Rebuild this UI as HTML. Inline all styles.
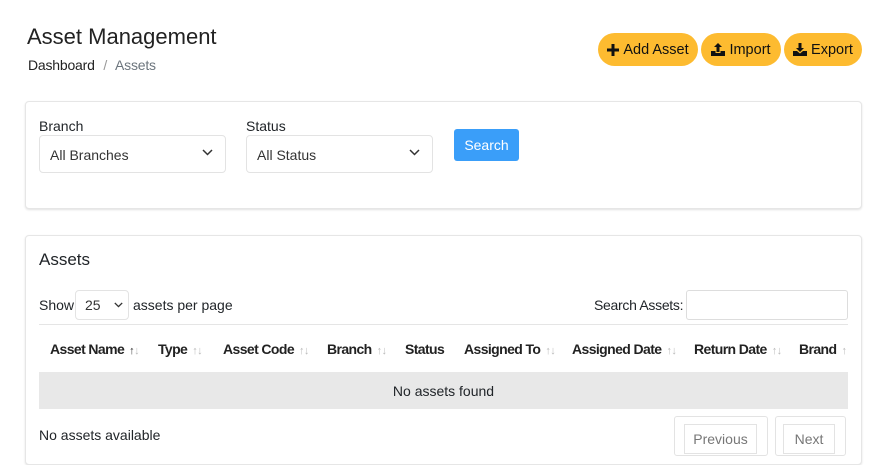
<!DOCTYPE html>
<html><head><meta charset="utf-8"><style>
*{box-sizing:border-box;margin:0;padding:0}
body{width:889px;height:448px;overflow:hidden;background:#fff;font-family:"Liberation Sans",sans-serif;color:#212529;position:relative}
.a{position:absolute;white-space:nowrap}
.card{position:absolute;background:#fff;border:1px solid #e6e6e6;border-radius:4px;box-shadow:0 1px 2px rgba(0,0,0,.12)}
.btn{position:absolute;top:33px;height:33px;background:#fdbb30;border-radius:17px;font-size:14.5px;color:#111;display:flex;align-items:center;justify-content:center;gap:4px}
.sel{position:absolute;height:38px;border:1px solid #e3e3e3;border-radius:4px;font-size:14px;padding:11px 10px;color:#333}
.chev{position:absolute;right:12px;top:13px}
.th{position:absolute;top:341px;font-size:14px;font-weight:bold;color:#222;letter-spacing:-0.6px}
.ar{color:#bbb;font-weight:normal;font-size:11px;margin-left:5px}
</style></head><body>
<div class="a" style="left:27px;top:24px;font-size:22px;color:#222">Asset Management</div>
<div class="a" style="left:28px;top:57px;font-size:14px;color:#222;letter-spacing:-0.2px">Dashboard <span style="color:#999;margin:0 5px">/</span> <span style="color:#6c757d">Assets</span></div>

<div class="btn" style="left:598px;width:100px"><svg width="12" height="12" viewBox="0 0 12 12"><path d="M4.5 0h3v4.5H12v3H7.5V12h-3V7.5H0v-3h4.5z" fill="#111"/></svg>Add Asset</div>
<div class="btn" style="left:701px;width:80px"><svg width="14" height="13" viewBox="0 0 14 13"><path d="M7 0L11 4H8.5v5h-3V4H3z M0 8h4.5v2h5V8H14v5H0z" fill="#111"/></svg>Import</div>
<div class="btn" style="left:784px;width:78px"><svg width="14" height="13" viewBox="0 0 14 13"><path d="M5.5 0h3v5H11L7 9 3 5h2.5z M0 8h4l3 2.5L10 8h4v5H0z" fill="#111"/></svg>Export</div>

<div class="card" style="left:25px;top:101px;width:837px;height:108px"></div>
<div class="a" style="left:39px;top:118px;font-size:14px">Branch</div>
<div class="sel" style="left:39px;top:135px;width:187px">All Branches<svg class="chev" width="11" height="7" viewBox="0 0 11 7"><path d="M1 1l4.5 4.5L10 1" stroke="#333" stroke-width="1.5" fill="none"/></svg></div>
<div class="a" style="left:246px;top:118px;font-size:14px">Status</div>
<div class="sel" style="left:246px;top:135px;width:187px">All Status<svg class="chev" width="11" height="7" viewBox="0 0 11 7"><path d="M1 1l4.5 4.5L10 1" stroke="#333" stroke-width="1.5" fill="none"/></svg></div>
<div class="a" style="left:454px;top:129px;width:65px;height:32px;background:#3a9ef9;border-radius:3px;color:#fff;font-size:14px;text-align:center;line-height:32px">Search</div>

<div class="card" style="left:25px;top:235px;width:837px;height:230px"></div>
<div class="a" style="left:39px;top:250px;font-size:17px">Assets</div>
<div class="a" style="left:39px;top:297px;font-size:14px">Show</div>
<div class="sel" style="left:75px;top:290px;width:54px;height:30px;padding:6px 9px">25<svg style="position:absolute;right:5px;top:11px" width="9" height="6" viewBox="0 0 11 7"><path d="M1 1l4.5 4.5L10 1" stroke="#333" stroke-width="1.6" fill="none"/></svg></div>
<div class="a" style="left:133px;top:297px;font-size:14px">assets per page</div>
<div class="a" style="left:594px;top:297px;font-size:14px;letter-spacing:-0.3px">Search Assets:</div>
<div class="a" style="left:686px;top:290px;width:162px;height:30px;border:1px solid #ddd;border-radius:3px"></div>
<div class="a" style="left:39px;top:324px;width:809px;height:1px;background:#e5e5e5"></div>
<div class="th" style="left:50px">Asset Name<span class="ar" style="color:#333">↑</span><span class="ar" style="margin-left:0">↓</span></div>
<div class="th" style="left:158px">Type<span class="ar">↑↓</span></div>
<div class="th" style="left:223px">Asset Code<span class="ar">↑↓</span></div>
<div class="th" style="left:327px">Branch<span class="ar">↑↓</span></div>
<div class="th" style="left:405px">Status</div>
<div class="th" style="left:464px">Assigned To<span class="ar">↑↓</span></div>
<div class="th" style="left:572px">Assigned Date<span class="ar">↑↓</span></div>
<div class="th" style="left:694px">Return Date<span class="ar">↑↓</span></div>
<div class="th" style="left:799px">Brand<span class="ar">↑</span></div>
<div class="a" style="left:39px;top:372px;width:809px;height:37px;background:#e8e8e8;text-align:center;font-size:14px;line-height:38px">No assets found</div>
<div class="a" style="left:39px;top:427px;font-size:14px">No assets available</div>
<div class="a" style="left:674px;top:416px;width:94px;height:40px;border:1px solid #e3e3e3;border-radius:3px"></div>
<div class="a" style="left:684px;top:424px;width:73px;height:30px;border:1px solid #e3e3e3;font-size:14px;color:#777;text-align:center;line-height:28px">Previous</div>
<div class="a" style="left:775px;top:416px;width:71px;height:40px;border:1px solid #e3e3e3;border-radius:3px"></div>
<div class="a" style="left:783px;top:424px;width:52px;height:30px;border:1px solid #e3e3e3;font-size:14px;color:#777;text-align:center;line-height:28px">Next</div>
</body></html>
